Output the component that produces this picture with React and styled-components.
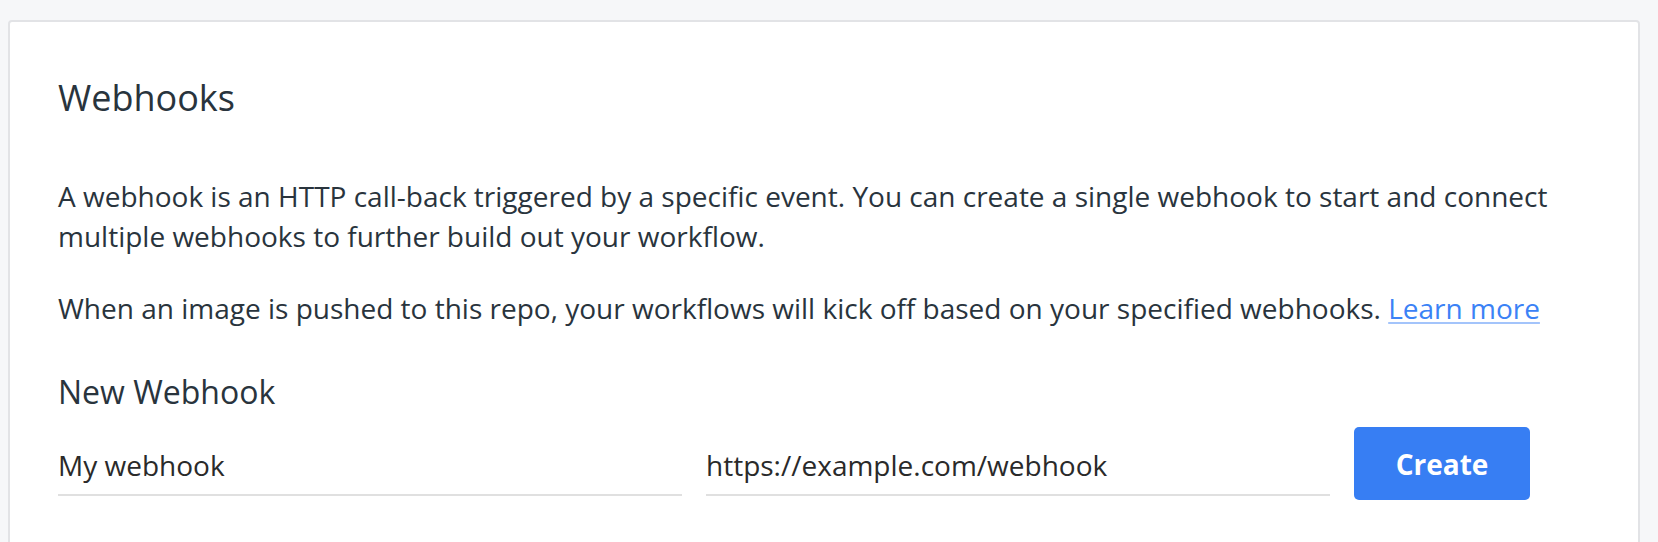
import React from "react";
import styled, { createGlobalStyle } from "styled-components";

const GlobalStyle = createGlobalStyle`
    html, body {
        margin: 0;
        padding: 0;
        background: #f6f7f9;
        font-family: "Open Sans", "Noto Sans", sans-serif;
        color: #29343d;
    }
    * {
        box-sizing: border-box;
    }
`;

const Page = styled.div`
    padding: 20px 18px 0 8px;
    height: 542px;
    overflow: hidden;
`;

const Card = styled.section`
    background: #fff;
    border: 2px solid #e2e3e6;
    border-radius: 4px;
    min-height: 560px;
    padding: 52px 48px 40px 48px;
`;

const Title = styled.h2`
    margin: 0;
    font-size: 36px;
    line-height: 48px;
    font-weight: 400;
`;

const Text = styled.p`
    margin: ${(p) => (p.$first ? "54px" : "32px")} 0 0;
    font-size: 28px;
    line-height: 40px;
`;

const LearnMore = styled.a`
    color: #3b82f6;
    text-decoration: underline;
    text-decoration-color: #a3c4fb;
    text-decoration-thickness: 2px;
    text-underline-offset: 3px;
`;

const SubTitle = styled.h3`
    margin: 42px 0 0;
    font-size: 32px;
    line-height: 44px;
    font-weight: 400;
`;

const FormRow = styled.form`
    display: flex;
    align-items: flex-start;
    gap: 24px;
    margin-top: 13px;
`;

const Field = styled.input`
    width: 624px;
    margin-top: 18px;
    padding: 0 0 9px;
    border: 0;
    border-bottom: 2px solid #e0e0e0;
    outline: none;
    background: transparent;
    font-family: inherit;
    font-size: 28px;
    line-height: 40px;
    height: 51px;
    color: #2a2a2a;
`;

const CreateButton = styled.button`
    width: 176px;
    height: 73px;
    border: 0;
    border-radius: 5px;
    background: #377ef3;
    color: #fff;
    font-family: inherit;
    font-size: 28px;
    font-weight: 700;
    cursor: pointer;
`;

export default function App() {
    return (
        <>
            <GlobalStyle />
            <Page>
                <Card>
                    <Title>Webhooks</Title>
                    <Text $first>
                        A webhook is an HTTP call-back triggered by a specific event. You can create a single webhook to start and connect
                        multiple webhooks to further build out your workflow.
                    </Text>
                    <Text>
                        When an image is pushed to this repo, your workflows will kick off based on your specified webhooks.{" "}
                        <LearnMore href="#">Learn more</LearnMore>
                    </Text>
                    <SubTitle>New Webhook</SubTitle>
                    <FormRow onSubmit={(e) => e.preventDefault()}>
                        <Field defaultValue="My webhook" />
                        <Field defaultValue="https://example.com/webhook" />
                        <CreateButton type="submit">Create</CreateButton>
                    </FormRow>
                </Card>
            </Page>
        </>
    );
}
